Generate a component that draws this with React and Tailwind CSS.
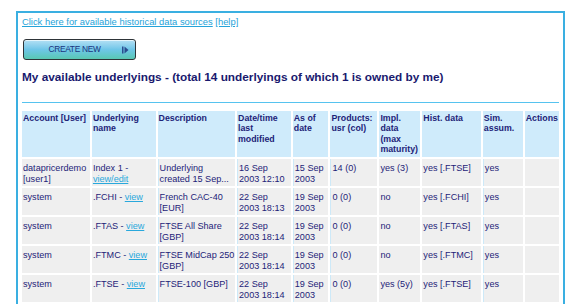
import React from "react";

const headers = [
  "Account [User]",
  "Underlying name",
  "Description",
  "Date/time last modified",
  "As of date",
  "Products: usr (col)",
  "Impl. data (max maturity)",
  "Hist. data",
  "Sim. assum.",
  "Actions",
];

const widths = ["w-[68px]", "w-[64px]", "w-[78px]", "w-[54px]", "w-[36px]", "w-[47px]", "w-[41px]", "w-[59px]", "w-[40px]", "w-[33px]"];

const rows = [
  {
    account: "datapricerdemo [user1]",
    name: "Index 1 - ",
    link: "view/edit",
    desc: "Underlying created 15 Sep...",
    modified: "16 Sep 2003 12:10",
    asOf: "15 Sep 2003",
    products: "14 (0)",
    impl: "yes (3)",
    hist: "yes [.FTSE]",
    sim: "yes",
  },
  {
    account: "system",
    name: ".FCHI - ",
    link: "view",
    desc: "French CAC-40 [EUR]",
    modified: "22 Sep 2003 18:13",
    asOf: "19 Sep 2003",
    products: "0 (0)",
    impl: "no",
    hist: "yes [.FCHI]",
    sim: "yes",
  },
  {
    account: "system",
    name: ".FTAS - ",
    link: "view",
    desc: "FTSE All Share [GBP]",
    modified: "22 Sep 2003 18:14",
    asOf: "19 Sep 2003",
    products: "0 (0)",
    impl: "no",
    hist: "yes [.FTAS]",
    sim: "yes",
  },
  {
    account: "system",
    name: ".FTMC - ",
    link: "view",
    desc: "FTSE MidCap 250 [GBP]",
    modified: "22 Sep 2003 18:14",
    asOf: "19 Sep 2003",
    products: "0 (0)",
    impl: "no",
    hist: "yes [.FTMC]",
    sim: "yes",
  },
  {
    account: "system",
    name: ".FTSE - ",
    link: "view",
    desc: "FTSE-100 [GBP]",
    modified: "22 Sep 2003 18:14",
    asOf: "19 Sep 2003",
    products: "0 (0)",
    impl: "yes (5y)",
    hist: "yes [.FTSE]",
    sim: "yes",
  },
];

const td = "bg-[#efefef] align-top pl-[1px] pt-[4px] h-[27px] leading-[10.5px]";
const tdSep = td + " border-l border-[#cde9f8]";

export default function App() {
  return (
    <div className="w-[575px] h-[304px] overflow-hidden bg-white font-['Liberation_Sans',Arial,sans-serif] text-[#1d2378]">
      <div className="pt-[11px] pl-[16px]">
        {/* main panel */}
        <div className="w-[549px] h-[300px] border-2 border-b-0 border-[#3aafe1] pl-[2px] pr-[2px]">
          <div className="pt-[3px] pl-[2px] text-[9.4px] leading-[11px] text-[#25a3d9]">
            <a href="#" className="underline">Click here for available historical data sources</a>{" "}
            <a href="#" className="underline">[help]</a>
          </div>

          <button className="mt-[12px] ml-[3px] w-[113px] h-[21px] rounded-[3px] border border-[#2e3438] bg-gradient-to-b from-[#b3e0f5] via-[#6fc6e8] to-[#58c8b2] flex items-center shadow-[inset_0_1px_0_#e4f5fc]">
            <span className="flex-1 text-center pl-[3px] text-[8.4px] tracking-[-0.3px] text-[#1a347c]">CREATE NEW</span>
            <svg width="7" height="8" viewBox="0 0 7 8" className="mr-[6px]">
              <rect x="0" y="0.5" width="1.5" height="7" fill="#2b4d8f" />
              <path d="M2.5 0.5 L6.5 4 L2.5 7.5 Z" fill="#2b4d8f" />
            </svg>
          </button>

          <h1 className="mt-[10px] pl-[2px] text-[11.8px] leading-[14px] font-bold text-[#19196e]">
            My available underlyings - (total 14 underlyings of which 1 is owned by me)
          </h1>

          <div className="mt-[18px] mx-[2px] h-[1px] bg-[#56c3ef]" />

          <table className="mt-[6px] border-separate border-spacing-[2px] table-fixed text-[9.1px]">
            <thead>
              <tr>
                {headers.map((h, i) => (
                  <th
                    key={h}
                    className={`${widths[i]} bg-[#cfebfb] align-top text-left font-bold px-[1px] pt-[2px] h-[46px] leading-[10.4px] text-[8.8px]`}
                  >
                    {h}
                  </th>
                ))}
              </tr>
            </thead>
            <tbody>
              {rows.map((r, i) => (
                <tr key={i}>
                  <td className={td}>{r.account}</td>
                  <td className={td}>
                    {r.name}
                    <a href="#" className="underline text-[#29a8dc]">{r.link}</a>
                  </td>
                  <td className={tdSep}>{r.desc}</td>
                  <td className={tdSep + " pr-[5px]"}>{r.modified}</td>
                  <td className={tdSep}>{r.asOf}</td>
                  <td className={tdSep}>{r.products}</td>
                  <td className={td}>{r.impl}</td>
                  <td className={td}>{r.hist}</td>
                  <td className={tdSep}>{r.sim}</td>
                  <td className={td}></td>
                </tr>
              ))}
            </tbody>
          </table>
        </div>
      </div>
    </div>
  );
}
